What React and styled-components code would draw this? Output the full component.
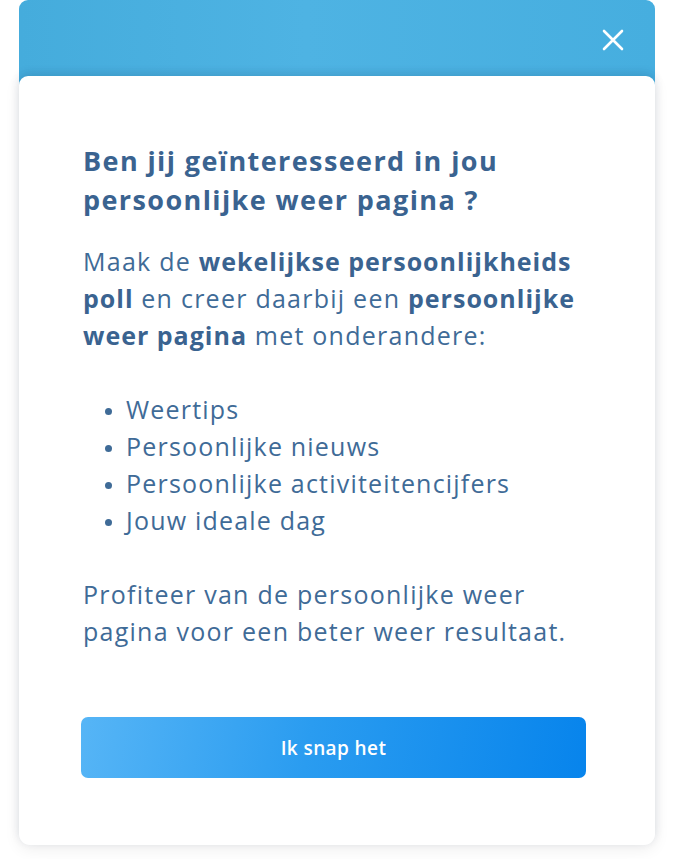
import React from "react";
import styled, { createGlobalStyle } from "styled-components";

const Global = createGlobalStyle`
  html, body { margin: 0; padding: 0; background: #ffffff; }
  body { font-family: "Open Sans", "Noto Sans", sans-serif; -webkit-font-smoothing: antialiased; }
  * { box-sizing: border-box; }
`;

const Page = styled.div`
  width: 674px;
  height: 859px;
  padding: 0 19px;
  background: #ffffff;
`;

const Modal = styled.div`
  display: flex;
  flex-direction: column;
`;

const Header = styled.div`
  height: 86px;
  border-radius: 9px 9px 0 0;
  background: linear-gradient(90deg, #45acdc 0%, #4eb3e3 45%, #46aedf 100%);
  display: flex;
  justify-content: flex-end;
  padding: 28px 30px 0 0;
`;

const CloseButton = styled.button`
  width: 24px;
  height: 24px;
  padding: 0;
  border: none;
  background: transparent;
  display: flex;
  align-items: center;
  justify-content: center;
  cursor: pointer;
`;

const Card = styled.div`
  margin-top: -10px;
  height: 769px;
  background: #ffffff;
  border-radius: 9px 9px 11px 11px;
  box-shadow: 0 -3px 10px rgba(0, 40, 80, 0.12), 0 4px 16px rgba(0, 0, 0, 0.07);
  padding: 65px 20px 0 64px;
  display: flex;
  flex-direction: column;
  color: #3e6992;
`;

const Title = styled.h2`
  margin: 0;
  font-size: 27px;
  line-height: 39px;
  font-weight: 700;
  letter-spacing: 1.4px;
  color: #3a6390;
  white-space: nowrap;
`;

const Text = styled.p`
  margin: ${(p) => p.$mt || 0}px 0 0;
  font-size: 25px;
  line-height: 37px;
  font-weight: 400;
  letter-spacing: 1.25px;
  color: #3f6b97;
  white-space: nowrap;
`;

const Strong = styled.strong`
  font-weight: 700;
  letter-spacing: 1px;
  color: #3a6390;
`;

const List = styled.ul`
  margin: 37px 0 0;
  padding: 0 0 0 43px;
  font-size: 25px;
  line-height: 37px;
  letter-spacing: 1.2px;
  color: #3f6b97;
  li::marker { font-size: 20px; }
`;

const Item = styled.li`
  padding-left: 0;
`;

const Button = styled.button`
  margin: 67px 0 0 -2px;
  width: 505px;
  height: 61px;
  border: none;
  border-radius: 7px;
  background: linear-gradient(100deg, #56b5f6 0%, #2a9cf0 45%, #0784ec 100%);
  color: #ffffff;
  font-family: "Open Sans", "Noto Sans", sans-serif;
  font-size: 19px;
  font-weight: 600;
  letter-spacing: 0.4px;
  cursor: pointer;
`;

export default function App() {
  return (
    <Page>
      <Global />
      <Modal>
        <Header>
          <CloseButton aria-label="Sluiten">
            <svg width="22" height="22" viewBox="0 0 22 22">
              <path d="M2 2 L20 20 M20 2 L2 20" stroke="#ffffff" strokeWidth="2.6" strokeLinecap="round" />
            </svg>
          </CloseButton>
        </Header>
        <Card>
          <Title>
            Ben jij geïnteresseerd in jou
            <br />
            persoonlijke weer pagina ?
          </Title>
          <Text $mt={24}>
            Maak de <Strong>wekelijkse persoonlijkheids</Strong>
            <br />
            <Strong>poll</Strong> en creer daarbij een <Strong>persoonlijke</Strong>
            <br />
            <Strong>weer pagina</Strong> met onderandere:
          </Text>
          <List>
            <Item>Weertips</Item>
            <Item>Persoonlijke nieuws</Item>
            <Item>Persoonlijke activiteitencijfers</Item>
            <Item>Jouw ideale dag</Item>
          </List>
          <Text $mt={37}>
            Profiteer van de persoonlijke weer
            <br />
            pagina voor een beter weer resultaat.
          </Text>
          <Button>Ik snap het</Button>
        </Card>
      </Modal>
    </Page>
  );
}
